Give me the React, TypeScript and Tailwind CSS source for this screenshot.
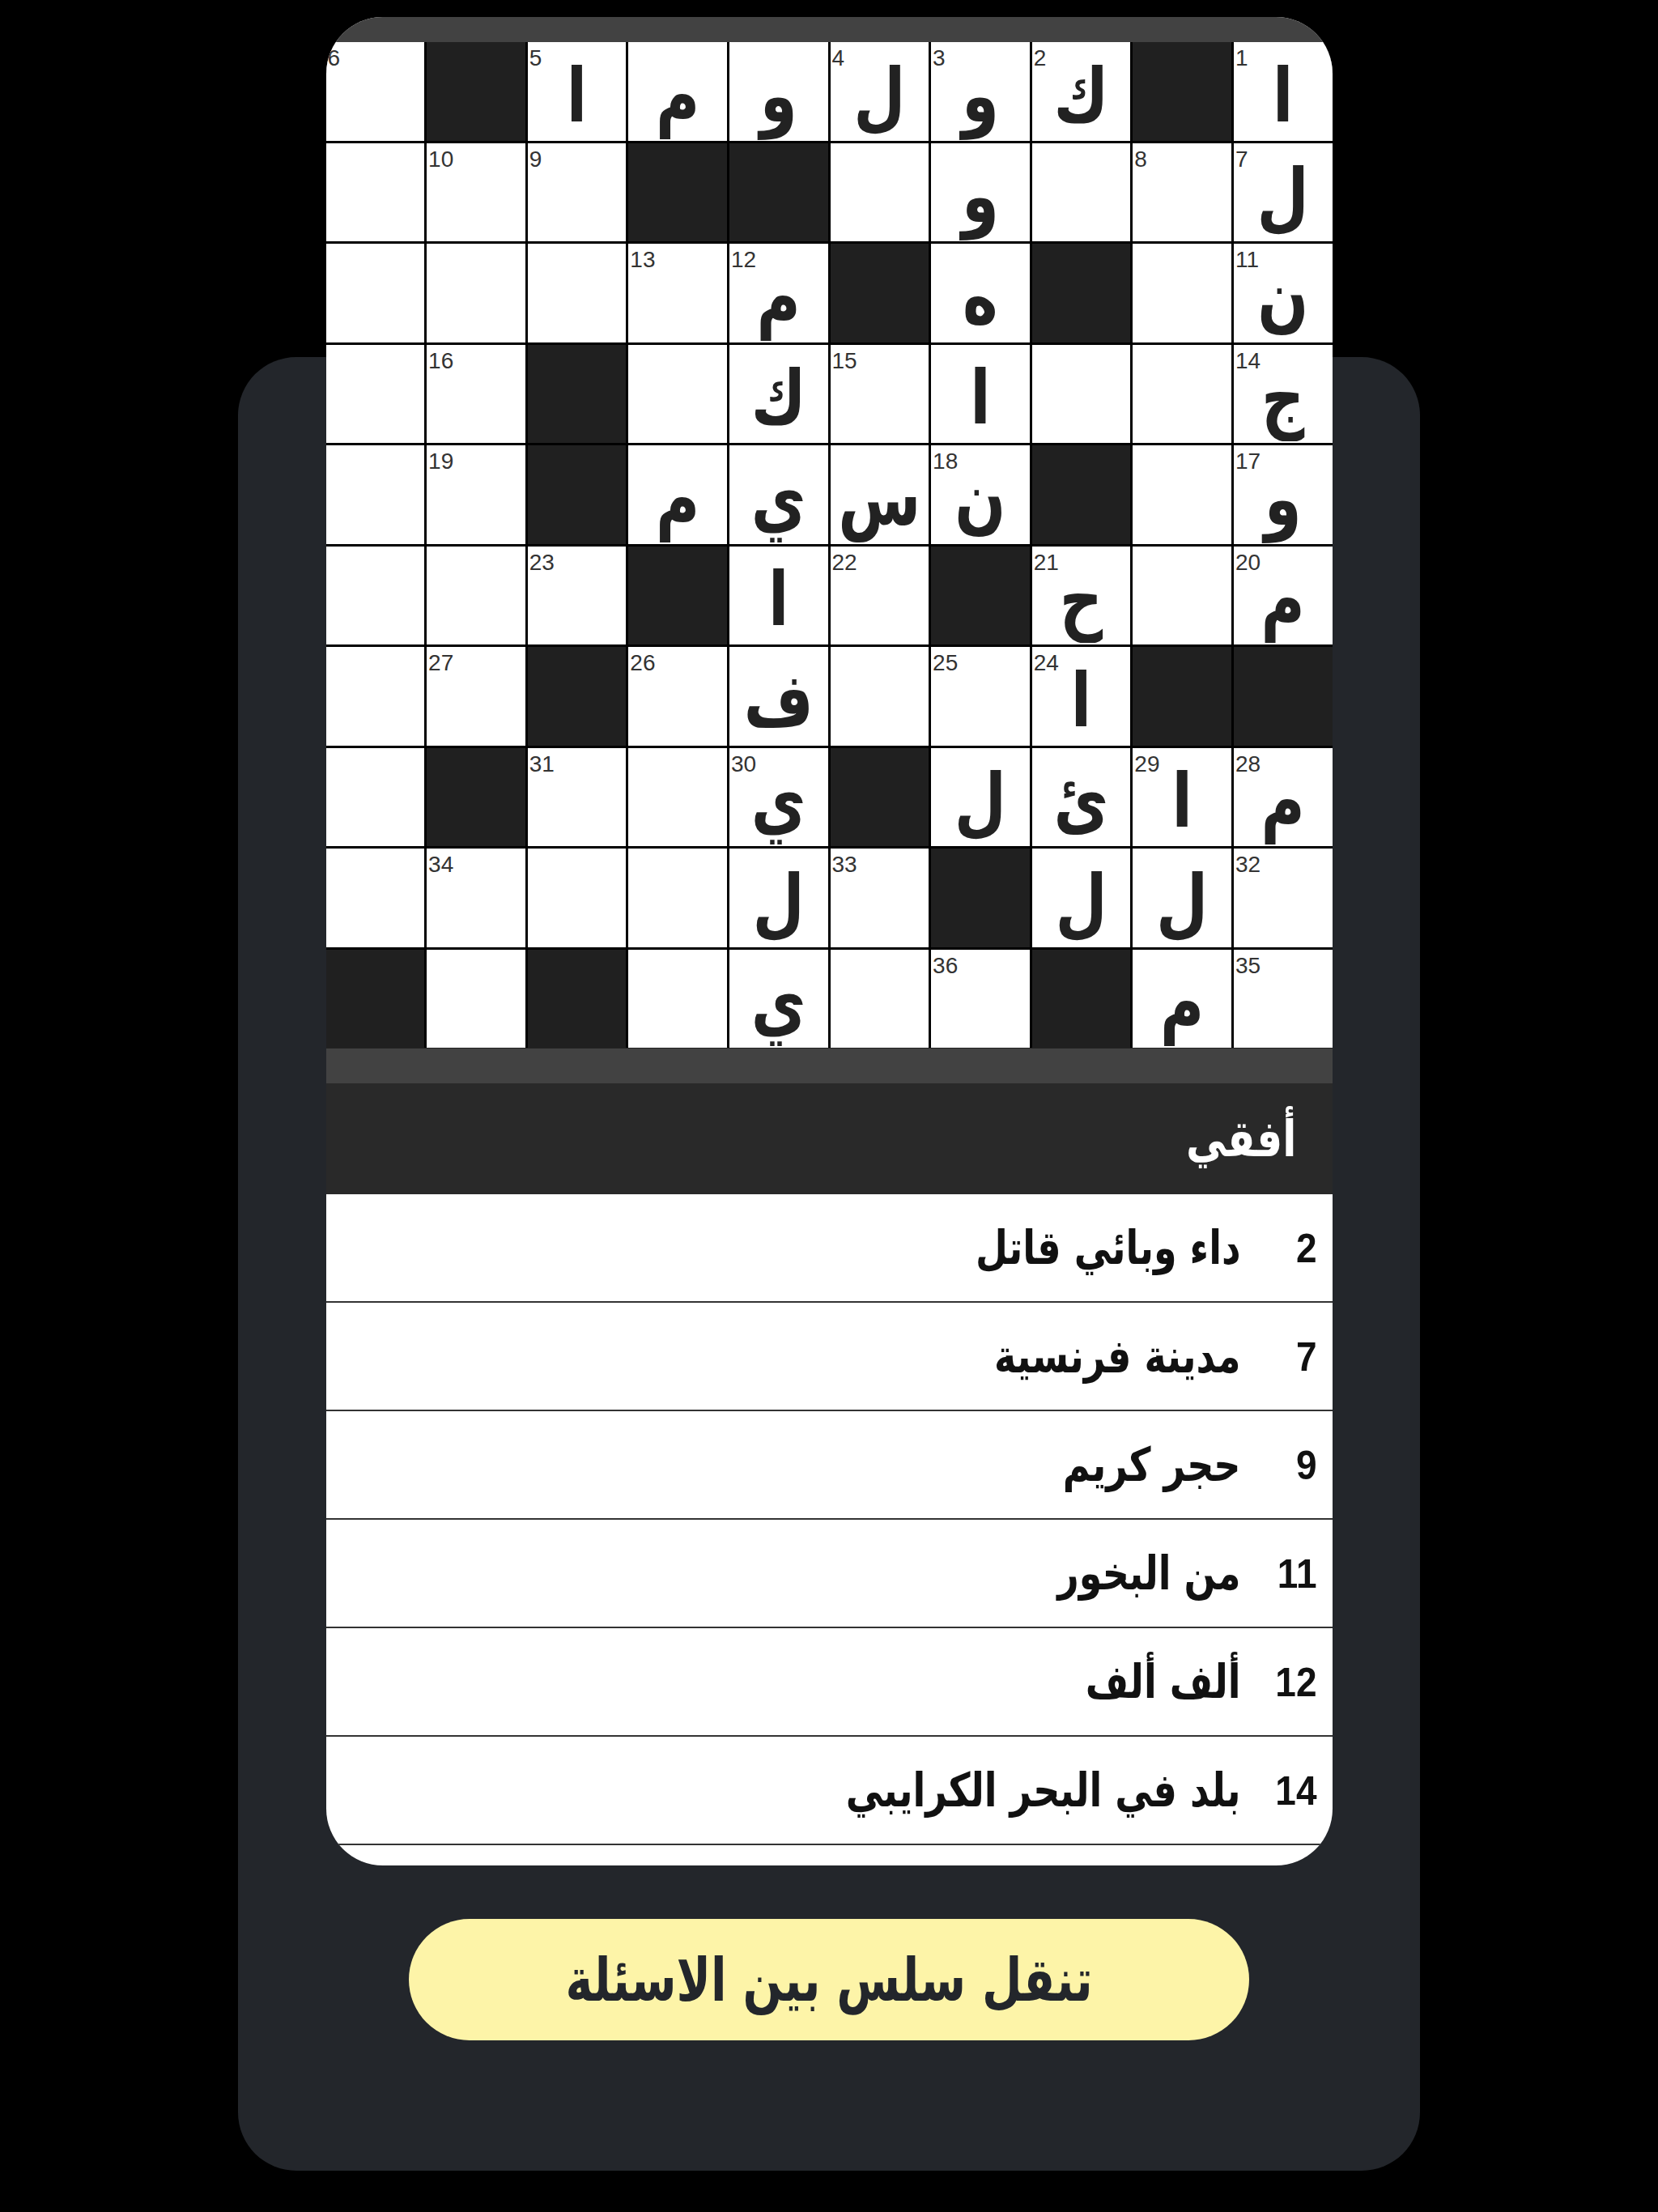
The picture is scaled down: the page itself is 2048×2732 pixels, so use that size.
import React from 'react';

type Cell = [number, string] | null;
const B = null;

// rows are written right to left, the grid runs in rtl
const grid: Cell[][] = [
  [[1, 'ا'], B, [2, 'ك'], [3, 'و'], [4, 'ل'], [0, 'و'], [0, 'م'], [5, 'ا'], B, [6, '']],
  [[7, 'ل'], [8, ''], [0, ''], [0, 'و'], [0, ''], B, B, [9, ''], [10, ''], [0, '']],
  [[11, 'ن'], [0, ''], B, [0, 'ه'], B, [12, 'م'], [13, ''], [0, ''], [0, ''], [0, '']],
  [[14, 'ج'], [0, ''], [0, ''], [0, 'ا'], [15, ''], [0, 'ك'], [0, ''], B, [16, ''], [0, '']],
  [[17, 'و'], [0, ''], B, [18, 'ن'], [0, 'س'], [0, 'ي'], [0, 'م'], B, [19, ''], [0, '']],
  [[20, 'م'], [0, ''], [21, 'ح'], B, [22, ''], [0, 'ا'], B, [23, ''], [0, ''], [0, '']],
  [B, B, [24, 'ا'], [25, ''], [0, ''], [0, 'ف'], [26, ''], B, [27, ''], [0, '']],
  [[28, 'م'], [29, 'ا'], [0, 'ئ'], [0, 'ل'], B, [30, 'ي'], [0, ''], [31, ''], B, [0, '']],
  [[32, ''], [0, 'ل'], [0, 'ل'], B, [33, ''], [0, 'ل'], [0, ''], [0, ''], [34, ''], [0, '']],
  [[35, ''], [0, 'م'], B, [36, ''], [0, ''], [0, 'ي'], [0, ''], B, [0, ''], B],
];

const clues = [
  { n: 2, text: 'داء وبائي قاتل' },
  { n: 7, text: 'مدينة فرنسية' },
  { n: 9, text: 'حجر كريم' },
  { n: 11, text: 'من البخور' },
  { n: 12, text: 'ألف ألف' },
  { n: 14, text: 'بلد في البحر الكرايبي' },
];

const arabic = { fontFamily: '"DejaVu Sans", "Noto Sans", sans-serif' };
const latin = { fontFamily: '"Liberation Sans", Arial, sans-serif' };

function GridCell({ cell }: { cell: Cell }) {
  if (!cell) return <div className="bg-[#202020]" />;
  const [num, letter] = cell;
  return (
    <div className="relative bg-white flex items-center justify-center">
      {num > 0 && (
        <span className="absolute top-[6px] left-[2px] text-[28px] leading-none text-[#333]" style={latin}>
          {num}
        </span>
      )}
      {letter && (
        <span className="text-[74px] font-bold leading-none text-[#222] mt-[8px] scale-y-[1.25]" style={arabic}>
          {letter}
        </span>
      )}
    </div>
  );
}

export default function App() {
  return (
    <div className="w-[2048px] h-[2732px] bg-black pt-[441px] overflow-hidden">
      <div className="mx-auto w-[1460px] h-[2240px] rounded-[72px] bg-[#23262b] flex flex-col items-center">
        <div className="-mt-[420px] w-[1243px] h-[2283px] rounded-[70px] overflow-hidden bg-white flex flex-col shrink-0">
          <div className="h-[31px] bg-[#424242] shrink-0" />

          <div dir="rtl" className="grid grid-cols-10 grid-rows-10 gap-[3px] bg-black h-[1243px] shrink-0 border-b border-[#222]">
            {grid.map((row, r) => row.map((cell, c) => <GridCell key={`${r}-${c}`} cell={cell} />))}
          </div>

          <div className="h-[43px] bg-[#424242] shrink-0" />

          <div dir="rtl" className="h-[137px] bg-[#292929] flex items-center pr-[44px] shrink-0">
            <h2 className="text-[50px] font-bold text-white leading-none scale-y-[1.25]" style={arabic}>أفقي</h2>
          </div>

          <div dir="rtl" className="flex flex-col">
            {clues.map((c) => (
              <div key={c.n} className="h-[134px] border-b-2 border-[#333] flex items-center pr-[19px] gap-[34px] shrink-0">
                <span className="w-[60px] text-right text-[46px] font-bold text-[#111] leading-none scale-y-[1.1]" style={latin}>
                  {c.n}
                </span>
                <span className="text-[46px] font-bold text-[#111] leading-none scale-y-[1.25]" style={arabic}>
                  {c.text}
                </span>
              </div>
            ))}
          </div>
        </div>

        <button className="mt-[66px] w-[1038px] h-[150px] rounded-full bg-[#fdf4a8] flex items-center justify-center shrink-0">
          <span dir="rtl" className="text-[57px] font-bold text-[#23262b] leading-none scale-y-[1.3]" style={arabic}>
            تنقل سلس بين الاسئلة
          </span>
        </button>
      </div>
    </div>
  );
}
